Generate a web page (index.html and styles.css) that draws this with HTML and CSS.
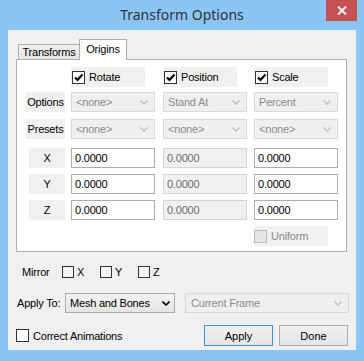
FILE: index.html
```html
<!DOCTYPE html>
<html lang="en">

<head>
  <meta charset="UTF-8">
  <title>Transform Options</title>
  <link rel="stylesheet" href="styles.css">
</head>

<body>
  <div class="window">
    <!-- Title bar -->
    <div class="titlebar">
      <span class="title">Transform Options</span>
      <span class="close">
        <svg width="10" height="9" viewBox="0 0 10 9"><path d="M1 0.5 L9 8.5 M9 0.5 L1 8.5" stroke="#fff" stroke-width="2" /></svg>
      </span>
    </div>

    <div class="client">
      <!-- Tabs -->
      <div class="tabs">
        <div class="tab">Transforms</div>
        <div class="tab active">Origins</div>
      </div>

      <div class="panel">
        <div class="grid">
          <span></span>
          <div class="check-cell"><span class="box checked"><svg width="11" height="11" viewBox="0 0 11 11"><path d="M2 5.5 L4.5 8 L9.5 2.5" fill="none" stroke="#000" stroke-width="2.2" /></svg></span>Rotate</div>
          <div class="check-cell"><span class="box checked"><svg width="11" height="11" viewBox="0 0 11 11"><path d="M2 5.5 L4.5 8 L9.5 2.5" fill="none" stroke="#000" stroke-width="2.2" /></svg></span>Position</div>
          <div class="check-cell"><span class="box checked"><svg width="11" height="11" viewBox="0 0 11 11"><path d="M2 5.5 L4.5 8 L9.5 2.5" fill="none" stroke="#000" stroke-width="2.2" /></svg></span>Scale</div>

          <div class="lbl wide">Options</div>
          <div class="select disabled"><span>&lt;none&gt;</span><svg class="chev" width="8" height="5" viewBox="0 0 8 5"><path d="M0.5 0.5 L4 4 L7.5 0.5" fill="none" stroke="currentColor" stroke-width="1.5" /></svg></div>
          <div class="select disabled"><span>Stand At</span><svg class="chev" width="8" height="5" viewBox="0 0 8 5"><path d="M0.5 0.5 L4 4 L7.5 0.5" fill="none" stroke="currentColor" stroke-width="1.5" /></svg></div>
          <div class="select disabled"><span>Percent</span><svg class="chev" width="8" height="5" viewBox="0 0 8 5"><path d="M0.5 0.5 L4 4 L7.5 0.5" fill="none" stroke="currentColor" stroke-width="1.5" /></svg></div>

          <div class="lbl wide">Presets</div>
          <div class="select disabled"><span>&lt;none&gt;</span><svg class="chev" width="8" height="5" viewBox="0 0 8 5"><path d="M0.5 0.5 L4 4 L7.5 0.5" fill="none" stroke="currentColor" stroke-width="1.5" /></svg></div>
          <div class="select disabled"><span>&lt;none&gt;</span><svg class="chev" width="8" height="5" viewBox="0 0 8 5"><path d="M0.5 0.5 L4 4 L7.5 0.5" fill="none" stroke="currentColor" stroke-width="1.5" /></svg></div>
          <div class="select disabled"><span>&lt;none&gt;</span><svg class="chev" width="8" height="5" viewBox="0 0 8 5"><path d="M0.5 0.5 L4 4 L7.5 0.5" fill="none" stroke="currentColor" stroke-width="1.5" /></svg></div>

          <div class="lbl">X</div>
          <input class="field" type="text" value="0.0000">
          <input class="field" type="text" value="0.0000" disabled>
          <input class="field" type="text" value="0.0000">

          <div class="lbl">Y</div>
          <input class="field" type="text" value="0.0000">
          <input class="field" type="text" value="0.0000" disabled>
          <input class="field" type="text" value="0.0000">

          <div class="lbl">Z</div>
          <input class="field" type="text" value="0.0000">
          <input class="field" type="text" value="0.0000" disabled>
          <input class="field" type="text" value="0.0000">

          <span></span>
          <span></span>
          <span></span>
          <div class="check-cell off"><span class="box"></span>Uniform</div>
        </div>
      </div>

      <!-- Mirror -->
      <div class="mirror">
        <span class="mirror-label">Mirror</span>
        <span class="mirror-item"><span class="box flat"></span>X</span>
        <span class="mirror-item"><span class="box flat"></span>Y</span>
        <span class="mirror-item"><span class="box flat"></span>Z</span>
      </div>

      <!-- Apply to -->
      <div class="apply-row">
        <span class="apply-label">Apply To:</span>
        <div class="select combo"><span>Mesh and Bones</span><svg class="chev" width="8" height="5" viewBox="0 0 8 5"><path d="M0.5 0.5 L4 4 L7.5 0.5" fill="none" stroke="currentColor" stroke-width="1.6" /></svg></div>
        <div class="select disabled frame"><span>Current Frame</span><svg class="chev" width="8" height="5" viewBox="0 0 8 5"><path d="M0.5 0.5 L4 4 L7.5 0.5" fill="none" stroke="currentColor" stroke-width="1.5" /></svg></div>
      </div>

      <div class="bottom-row">
        <span class="correct"><span class="box"></span>Correct Animations</span>
        <button class="btn default">Apply</button>
        <button class="btn">Done</button>
      </div>
    </div>
  </div>
</body>

</html>
```

FILE: styles.css
```css
body {
  margin: 0;
  font-family: "Liberation Sans", Arial, sans-serif;
  font-size: 11px;
  letter-spacing: -0.2px;
  color: #000;
}

.window {
  width: 364px;
  height: 361px;
  background: #8bc5f5;
  box-sizing: border-box;
  padding: 0 8px 11px 8px;
}

.titlebar {
  position: relative;
  height: 30px;
  display: flex;
  align-items: center;
  justify-content: center;
}

.title {
  font-family: "Noto Sans", sans-serif;
  font-size: 14px;
  letter-spacing: 0;
  color: #333;
  margin-top: -1px;
}

.close {
  position: absolute;
  top: 0;
  right: -1px;
  width: 31px;
  height: 21px;
  background: #c75050;
  display: flex;
  align-items: center;
  justify-content: center;
}

.client {
  height: 320px;
  background: #f0f0f0;
  box-sizing: border-box;
  padding: 9px 9px 0 8px;
}

/* Tabs */
.tabs {
  display: flex;
  align-items: flex-end;
  height: 20px;
  padding-left: 2px;
}

.tab {
  height: 14px;
  width: 60px;
  border: 1px solid #adadad;
  border-bottom: none;
  background: linear-gradient(#f0f0f0, #e5e5e5);
  text-align: center;
  line-height: 14px;
}

.tab.active {
  position: relative;
  z-index: 1;
  height: 20px;
  width: 46px;
  margin-left: -1px;
  margin-bottom: -1px;
  background: #fff;
  line-height: 18px;
}

.panel {
  width: 331px;
  height: 193px;
  box-sizing: border-box;
  border: 1px solid #adadad;
  background: #fff;
}

.grid {
  display: grid;
  grid-template-columns: 45px 92px 91px 84px;
  grid-template-rows: 25px 27px 29px 26px 26px 26px 20px;
  align-items: start;
  padding: 7px 0 0 9px;
}

.check-cell {
  width: 74px;
  height: 20px;
  background: #f0f0f0;
  display: flex;
  align-items: center;
  gap: 4px;
  padding-left: 1px;
  box-sizing: border-box;
}

.check-cell.off {
  color: #8b8b8b;
  padding-left: 0;
}

.box {
  width: 13px;
  height: 13px;
  box-sizing: border-box;
  border: 1px solid #333;
  background: #fff;
  display: inline-flex;
  align-items: center;
  justify-content: center;
  flex: none;
}

.check-cell.off .box {
  border-color: #bcbcbc;
  background: #e6e6e6;
}

.box.flat {
  width: 12px;
  height: 12px;
  background: #f4f4f4;
}

.lbl {
  height: 20px;
  width: 36px;
  margin-left: 3px;
  background: #f0f0f0;
  text-align: center;
  line-height: 20px;
}

.lbl.wide {
  width: 39px;
  margin-left: 0;
}

.select {
  width: 84px;
  height: 20px;
  box-sizing: border-box;
  border: 1px solid #acacac;
  display: flex;
  align-items: center;
  justify-content: space-between;
  padding: 0 6px 0 4px;
  flex: none;
}

.select.disabled {
  border-color: #d9d9d9;
  background: #efefef;
  color: #8b8b8b;
}

.select.disabled .chev {
  color: #c4c4c4;
}

.field {
  width: 84px;
  height: 20px;
  box-sizing: border-box;
  margin: 0;
  border: 1px solid #abadb3;
  padding: 0 3px;
  font-family: "Liberation Sans", Arial, sans-serif;
  font-size: 11px;
  letter-spacing: -0.2px;
  color: #000;
  background: #fff;
  outline: none;
}

.field:disabled {
  border-color: #d5d5d5;
  background: #f0f0f0;
  color: #6d6d6d;
}

/* Below the panel */
.mirror {
  display: flex;
  align-items: center;
  height: 13px;
  margin-top: 13px;
  padding-left: 6px;
}

.mirror-label {
  width: 40px;
}

.mirror-item {
  display: inline-flex;
  align-items: center;
  gap: 3px;
  width: 38px;
}

.apply-row {
  display: flex;
  align-items: center;
  margin-top: 15px;
  padding-left: 1px;
}

.apply-label {
  width: 48px;
  flex: none;
}

.select.combo {
  width: 110px;
  background: linear-gradient(#f2f2f2, #e5e5e5);
  padding-right: 4px;
  color: #000;
}

.select.frame {
  width: 164px;
  margin-left: 10px;
  padding-left: 5px;
}

.bottom-row {
  display: flex;
  align-items: center;
  margin-top: 12px;
}

.correct {
  display: inline-flex;
  align-items: center;
  gap: 4px;
  width: 188px;
  flex: none;
}

.btn {
  width: 69px;
  height: 21px;
  flex: none;
  margin-left: 6px;
  border: 1px solid #adadad;
  background: linear-gradient(#f0f0f0, #e5e5e5);
  font-family: "Liberation Sans", Arial, sans-serif;
  font-size: 11px;
  color: #000;
  padding: 0;
}

.btn.default {
  margin-left: 0;
  border-color: #3399ff;
}
```
